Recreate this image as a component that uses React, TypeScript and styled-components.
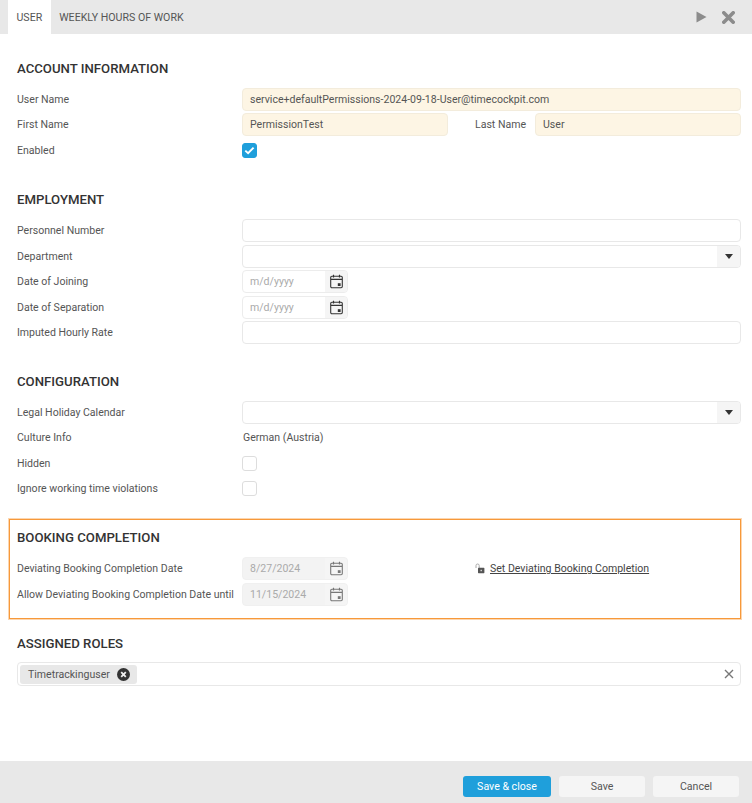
import React from "react";
import styled, { createGlobalStyle } from "styled-components";

const GlobalStyle = createGlobalStyle`
    html, body, #root {
        margin: 0;
        padding: 0;
        height: 100%;
    }
    body {
        background: #fff;
        font-family: Roboto, "Liberation Sans", sans-serif;
        font-size: 10.55px;
        color: #555;
    }
    * {
        box-sizing: border-box;
    }
`;

function CalendarIcon(props: { muted?: boolean }): React.ReactElement {
    const color = props.muted ? "#777" : "#333";
    return (
        <svg width="13" height="15" viewBox="0 0 13 15" fill="none">
            <rect x="0.7" y="2.2" width="11.6" height="11.6" rx="1.2" stroke={color} strokeWidth="1.1" />
            <path d="M1 5.4h11" stroke={color} strokeWidth="1.1" />
            <path d="M3.5 0.8v2.6M9.5 0.8v2.6" stroke={color} strokeWidth="1.2" />
            <rect x="7.8" y="9.2" width="2.8" height="2.8" fill={color} />
        </svg>
    );
}

function DropdownIcon(): React.ReactElement {
    return (
        <svg width="8" height="5" viewBox="0 0 8 5">
            <path d="M0 0h8L4 5z" fill="#333" />
        </svg>
    );
}

function LockIcon(): React.ReactElement {
    return (
        <svg width="10" height="11" viewBox="0 0 10 11" fill="none">
            <path d="M1 5V2.6a1.6 1.6 0 0 1 3.2 0V5" stroke="#aaa" strokeWidth="1" />
            <rect x="3" y="4.8" width="6.4" height="5.4" rx="0.6" fill="#555" />
            <rect x="5.5" y="6.8" width="1.4" height="1.4" fill="#ddd" />
        </svg>
    );
}

function DateInput(props: { value?: string; disabled?: boolean }): React.ReactElement {
    return (
        <DateBox $disabled={props.disabled}>
            <DateText>{props.value || "m/d/yyyy"}</DateText>
            <DateButton>
                <CalendarIcon muted={props.disabled} />
            </DateButton>
        </DateBox>
    );
}

function SelectInput(): React.ReactElement {
    return (
        <SelectBox>
            <SelectArrow>
                <DropdownIcon />
            </SelectArrow>
        </SelectBox>
    );
}

export default function App(): React.ReactElement {
    return (
        <Page>
            <GlobalStyle />
            <TabBar>
                <Tab $active>USER</Tab>
                <Tab>WEEKLY HOURS OF WORK</Tab>
                <TabActions>
                    <svg width="11" height="12" viewBox="0 0 11 12">
                        <path d="M0.5 0.5L10.5 6L0.5 11.5z" fill="#8c8c8c" />
                    </svg>
                    <svg width="13" height="13" viewBox="0 0 13 13">
                        <path d="M1.8 1.8L11.2 11.2M11.2 1.8L1.8 11.2" stroke="#8c8c8c" strokeWidth="3.6" strokeLinecap="round" />
                    </svg>
                </TabActions>
            </TabBar>

            <Content>
                <Section $gap={27}>
                    <Heading>ACCOUNT INFORMATION</Heading>
                    <Row>
                        <Label>User Name</Label>
                        <TextBox $filled>service+defaultPermissions-2024-09-18-User@timecockpit.com</TextBox>
                    </Row>
                    <Row>
                        <Label>First Name</Label>
                        <NameFields>
                            <TextBox $filled>PermissionTest</TextBox>
                            <InlineLabel>Last Name</InlineLabel>
                            <TextBox $filled>User</TextBox>
                        </NameFields>
                    </Row>
                    <Row>
                        <Label>Enabled</Label>
                        <Checkbox $checked>
                            <svg width="11" height="9" viewBox="0 0 11 9" fill="none">
                                <path d="M1.3 4.6L4.1 7.2L9.6 1.6" stroke="#fff" strokeWidth="1.9" />
                            </svg>
                        </Checkbox>
                    </Row>
                </Section>

                <Section $gap={26}>
                    <Heading>EMPLOYMENT</Heading>
                    <Row>
                        <Label>Personnel Number</Label>
                        <TextBox />
                    </Row>
                    <Row>
                        <Label>Department</Label>
                        <SelectInput />
                    </Row>
                    <Row>
                        <Label>Date of Joining</Label>
                        <DateInput />
                    </Row>
                    <Row>
                        <Label>Date of Separation</Label>
                        <DateInput />
                    </Row>
                    <Row>
                        <Label>Imputed Hourly Rate</Label>
                        <TextBox />
                    </Row>
                </Section>

                <Section>
                    <Heading>CONFIGURATION</Heading>
                    <Row>
                        <Label>Legal Holiday Calendar</Label>
                        <SelectInput />
                    </Row>
                    <Row>
                        <Label>Culture Info</Label>
                        <StaticValue>German (Austria)</StaticValue>
                    </Row>
                    <Row>
                        <Label>Hidden</Label>
                        <Checkbox />
                    </Row>
                    <Row>
                        <Label>Ignore working time violations</Label>
                        <Checkbox />
                    </Row>
                </Section>

                <Section $highlighted>
                    <Heading>BOOKING COMPLETION</Heading>
                    <Row>
                        <Label>Deviating Booking Completion Date</Label>
                        <DateInput value="8/27/2024" disabled />
                        <ActionLink>
                            <LockIcon />
                            <span>Set Deviating Booking Completion</span>
                        </ActionLink>
                    </Row>
                    <Row>
                        <Label>Allow Deviating Booking Completion Date until</Label>
                        <DateInput value="11/15/2024" disabled />
                    </Row>
                </Section>

                <Section>
                    <Heading>ASSIGNED ROLES</Heading>
                    <TagField>
                        <Tag>
                            Timetrackinguser
                            <svg width="13" height="13" viewBox="0 0 13 13">
                                <circle cx="6.5" cy="6.5" r="6.5" fill="#333" />
                                <path d="M4.2 4.2L8.8 8.8M8.8 4.2L4.2 8.8" stroke="#eee" strokeWidth="1.8" />
                            </svg>
                        </Tag>
                        <ClearButton>
                            <svg width="10" height="10" viewBox="0 0 10 10">
                                <path d="M1 1L9 9M9 1L1 9" stroke="#777" strokeWidth="1.4" />
                            </svg>
                        </ClearButton>
                    </TagField>
                </Section>
            </Content>

            <Footer>
                <FooterButton $primary>Save &amp; close</FooterButton>
                <FooterButton>Save</FooterButton>
                <FooterButton>Cancel</FooterButton>
            </Footer>
        </Page>
    );
}

const Page = styled.div`
    display: flex;
    flex-direction: column;
    min-height: 100%;
`;

const TabBar = styled.div`
    display: flex;
    height: 34px;
    padding-left: 8px;
    background: #e8e8e8;
`;

const Tab = styled.div<{ $active?: boolean }>`
    display: flex;
    align-items: center;
    padding: 0 8.5px;
    background: ${(p) => (p.$active ? "#fff" : "transparent")};
    color: #555;
    font-size: 10.6px;
`;

const TabActions = styled.div`
    display: flex;
    align-items: center;
    gap: 15px;
    margin-left: auto;
    padding-right: 17px;
`;

const Content = styled.div`
    display: flex;
    flex-direction: column;
    padding: 24.5px 10px 0 8px;
`;

const Section = styled.section<{ $highlighted?: boolean; $gap?: number }>`
    padding: 0 1px 0 9px;
    margin-bottom: ${(p) => p.$gap ?? 26.5}px;
    ${(p) =>
        p.$highlighted &&
        `
        margin: -9px 1px 15px;
        padding: 8px 0 11px 7px;
        border: 1px solid #f7993a;
        box-shadow: 0 0 0 1px rgba(247, 153, 58, 0.4);
        `}
`;

const Heading = styled.h2`
    margin: 0 0 8px;
    height: 20px;
    line-height: 20px;
    font-size: 13.2px;
    font-weight: 500;
    color: #333;
`;

const Row = styled.div`
    display: flex;
    align-items: center;
    height: 25.5px;
`;

const Label = styled.div`
    flex: 0 0 225px;
    white-space: nowrap;
`;

const TextBox = styled.div<{ $filled?: boolean }>`
    flex: 1;
    display: flex;
    align-items: center;
    height: 23px;
    padding: 0 7px;
    border: 1px solid ${(p) => (p.$filled ? "#f3ecdc" : "#e8e8e8")};
    border-radius: 4px;
    background: ${(p) => (p.$filled ? "#fdf5e4" : "#fff")};
    color: #555;
`;

const NameFields = styled.div`
    flex: 1;
    display: grid;
    grid-template-columns: 206px 87px 1fr;
    align-items: center;
`;

const InlineLabel = styled.div`
    padding-left: 27px;
`;

const Checkbox = styled.div<{ $checked?: boolean }>`
    display: flex;
    align-items: center;
    justify-content: center;
    width: 15px;
    height: 15px;
    border: 1px solid ${(p) => (p.$checked ? "#1f9fdb" : "#ddd")};
    border-radius: 3px;
    background: ${(p) => (p.$checked ? "#1f9fdb" : "#fff")};
`;

const StaticValue = styled.div`
    padding-left: 1px;
`;

const DateBox = styled.div<{ $disabled?: boolean }>`
    display: flex;
    flex: 0 0 106px;
    height: 23px;
    border: 1px solid ${(p) => (p.$disabled ? "#f0f0f0" : "#ececec")};
    border-radius: 4px;
    background: ${(p) => (p.$disabled ? "#f3f3f3" : "#fff")};
    overflow: hidden;
`;

const DateText = styled.div`
    flex: 1;
    display: flex;
    align-items: center;
    padding-left: 7px;
    color: #aaa;
`;

const DateButton = styled.div`
    display: flex;
    flex: 0 0 22px;
    align-items: center;
    justify-content: center;
    background: #f5f5f5;
`;

const SelectBox = styled.div`
    flex: 1;
    display: flex;
    justify-content: flex-end;
    height: 23px;
    border: 1px solid #e8e8e8;
    border-radius: 4px;
    overflow: hidden;
`;

const SelectArrow = styled.div`
    display: flex;
    width: 23px;
    align-items: center;
    justify-content: center;
    background: #f5f5f5;
`;

const ActionLink = styled.div`
    display: flex;
    align-items: center;
    gap: 5px;
    margin-left: 127px;
    color: #444;

    span {
        text-decoration: underline;
    }
`;

const TagField = styled.div`
    display: flex;
    align-items: center;
    height: 24px;
    padding: 0 5px 0 2px;
    border: 1px solid #e8e8e8;
    border-radius: 4px;
`;

const Tag = styled.div`
    display: flex;
    align-items: center;
    gap: 7.5px;
    height: 19px;
    padding: 0 7px 0 8px;
    border-radius: 3px;
    background: #e8e8e8;
    color: #555;
`;

const ClearButton = styled.div`
    display: flex;
    margin-left: auto;
    margin-right: 1px;
`;

const Footer = styled.footer`
    display: flex;
    justify-content: flex-end;
    gap: 8px;
    height: 42px;
    margin-top: auto;
    padding: 15px 13px 0 0;
    background: #e8e8e8;
`;

const FooterButton = styled.button<{ $primary?: boolean }>`
    width: ${(p) => (p.$primary ? "88px" : "86px")};
    height: 21px;
    padding: 0;
    border: none;
    border-radius: 3px;
    background: ${(p) => (p.$primary ? "#1f9fdb" : "#f5f5f5")};
    color: ${(p) => (p.$primary ? "#fff" : "#555")};
    font-family: inherit;
    font-size: 10.6px;
`;
